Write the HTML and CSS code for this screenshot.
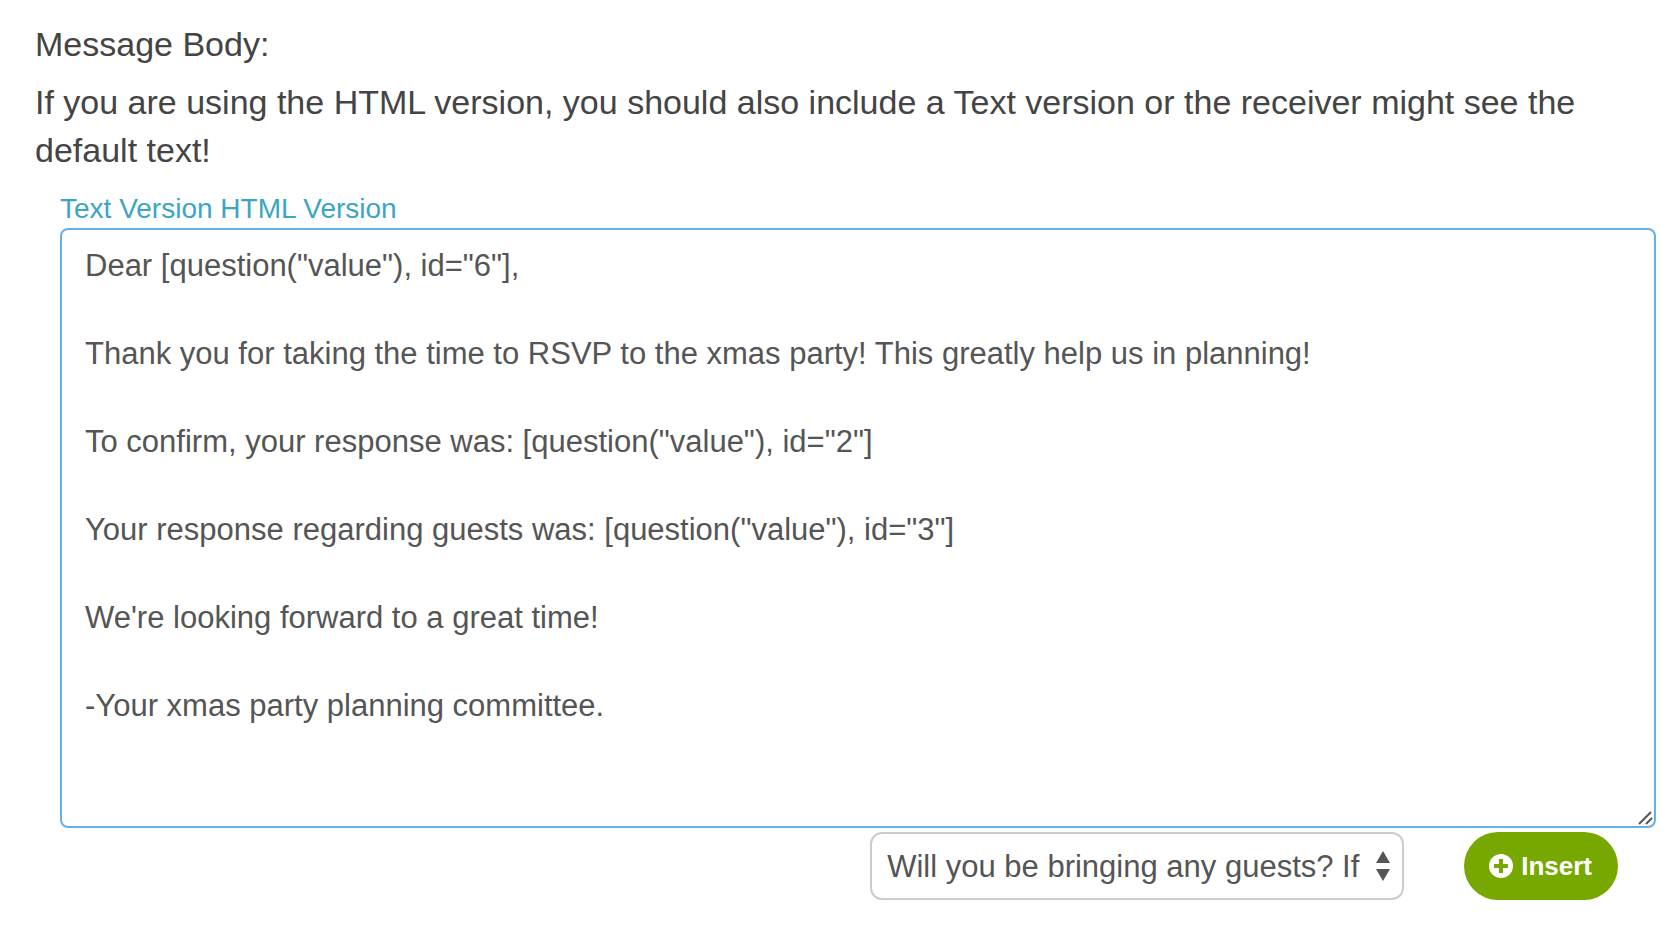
FILE: index.html
```html
<!DOCTYPE html>
<html lang="en">
<head>
  <meta charset="UTF-8">
  <title>Message Body</title>
  <link rel="stylesheet" href="styles.css">
</head>
<body>

<form class="message-form">
  <label class="title" for="message">Message Body:</label>
  <p class="hint">If you are using the HTML version, you should also include a Text version or the receiver might see the default text!</p>

  <div class="editor">
    <nav class="versions">
      <a href="#text">Text Version</a>
      <a href="#html">HTML Version</a>
    </nav>

    <div class="message-box">
      <textarea id="message" name="message" rows="13" spellcheck="false">Dear [question("value"), id="6"],

Thank you for taking the time to RSVP to the xmas party! This greatly help us in planning!

To confirm, your response was: [question("value"), id="2"]

Your response regarding guests was: [question("value"), id="3"]

We're looking forward to a great time!

-Your xmas party planning committee.</textarea>
      <svg class="grip" width="16" height="16" viewBox="0 0 16 16" aria-hidden="true">
        <path d="M1 14L13 2M8 14L14 8" fill="none" stroke="#555" stroke-width="2"/>
      </svg>
    </div>

    <div class="actions">
      <div class="question-select">
        <select id="question" name="question" aria-label="Question">
          <option>Will you be bringing any guests? If</option>
        </select>
        <svg class="arrows" width="14" height="30" viewBox="0 0 14 30" aria-hidden="true">
          <path d="M7 0L14 12H0zM7 30L0 18H14z" fill="#555"/>
        </svg>
      </div>
      <button type="button" class="insert">
        <svg width="24" height="24" viewBox="0 0 24 24" aria-hidden="true">
          <circle cx="12" cy="12" r="12" fill="#fff"/>
          <path d="M12 5V19M5 12H19" stroke="#77a800" stroke-width="4"/>
        </svg>
        Insert
      </button>
    </div>
  </div>
</form>

</body>
</html>
```
FILE: styles.css
```css
body {
  margin: 0;
  background-color: #fff;
  font-family: "Liberation Sans", Arial, sans-serif;
  color: #444;
}

.message-form {
  padding: 20px 14px 36px 35px;
}

.title {
  display: block;
  font-size: 34px;
  line-height: 48px;
}

.hint {
  margin: 10px 60px 16px 0;
  font-size: 34px;
  line-height: 48px;
}

.editor {
  padding-left: 25px;
}

.versions {
  font-size: 28px;
  line-height: 38px;
}

.versions a {
  color: #3ba5c6;
  text-decoration: none;
}

.message-box {
  position: relative;
}

.message-box textarea {
  display: block;
  box-sizing: border-box;
  width: 100%;
  padding: 14px 23px 10px;
  border: 2px solid #66afe9;
  border-radius: 8px;
  outline: none;
  resize: none;
  overflow: hidden;
  background-color: #fff;
  font-family: inherit;
  font-size: 31px;
  line-height: 44px;
  color: #555;
}

.grip {
  position: absolute;
  right: 2px;
  bottom: 2px;
}

.actions {
  display: flex;
  justify-content: flex-end;
  gap: 60px;
  padding: 4px 38px 0 0;
}

.question-select {
  position: relative;
  width: 534px;
}

.question-select select {
  appearance: none;
  width: 100%;
  height: 68px;
  padding: 0 40px 0 15px;
  border: 2px solid #ccc;
  border-radius: 12px;
  background-color: #fff;
  font-family: inherit;
  font-size: 31px;
  color: #555;
}

.arrows {
  position: absolute;
  top: 19px;
  right: 14px;
  pointer-events: none;
}

.insert {
  display: flex;
  align-items: center;
  gap: 8px;
  height: 68px;
  padding: 0 26px 0 25px;
  border: none;
  border-radius: 34px;
  background-color: #77a800;
  font-family: inherit;
  font-size: 26px;
  font-weight: bold;
  color: #fff;
  cursor: pointer;
}

.insert:hover {
  background-color: #689300;
}
```
